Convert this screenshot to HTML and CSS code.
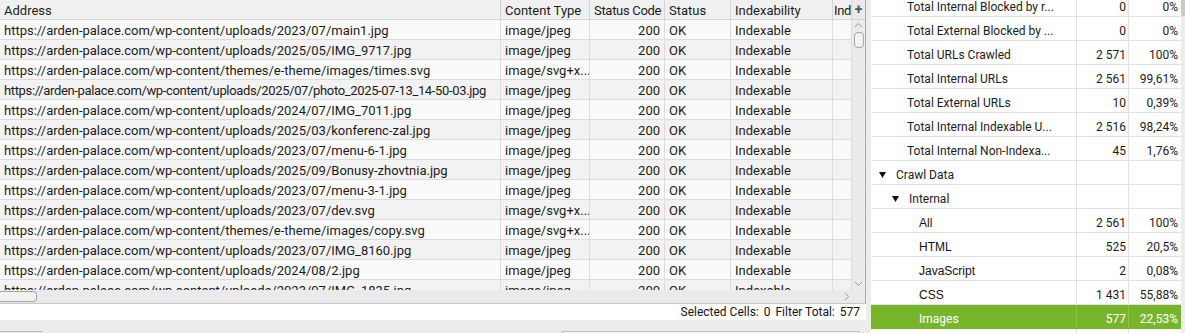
FILE: index.html
```html
<!DOCTYPE html>
<html lang="en">

<head>
    <meta charset="UTF-8">
    <meta name="viewport" content="width=device-width, initial-scale=1.0">
    <title>Crawl</title>
    <link rel="stylesheet" href="styles.css">
</head>

<body>
    <div class="app">
        <div class="left">
            <div class="grid">
                <div class="grid-head">
                    <div class="cell">Address</div>
                    <div class="cell">Content Type</div>
                    <div class="cell">Status Code</div>
                    <div class="cell">Status</div>
                    <div class="cell">Indexability</div>
                    <div class="cell cut">Ind</div>
                    <div class="cell plus">+</div>
                </div>
                <div class="grid-body">
                    <div class="rows">
                        <div class="row"><div class="cell">https://arden-palace.com/wp-content/uploads/2023/07/main1.jpg</div><div class="cell">image/jpeg</div><div class="cell num">200</div><div class="cell">OK</div><div class="cell">Indexable</div><div class="cell"></div></div>
                        <div class="row"><div class="cell">https://arden-palace.com/wp-content/uploads/2025/05/IMG_9717.jpg</div><div class="cell">image/jpeg</div><div class="cell num">200</div><div class="cell">OK</div><div class="cell">Indexable</div><div class="cell"></div></div>
                        <div class="row"><div class="cell">https://arden-palace.com/wp-content/themes/e-theme/images/times.svg</div><div class="cell">image/svg+x...</div><div class="cell num">200</div><div class="cell">OK</div><div class="cell">Indexable</div><div class="cell"></div></div>
                        <div class="row"><div class="cell tight">https://arden-palace.com/wp-content/uploads/2025/07/photo_2025-07-13_14-50-03.jpg</div><div class="cell">image/jpeg</div><div class="cell num">200</div><div class="cell">OK</div><div class="cell">Indexable</div><div class="cell"></div></div>
                        <div class="row"><div class="cell">https://arden-palace.com/wp-content/uploads/2024/07/IMG_7011.jpg</div><div class="cell">image/jpeg</div><div class="cell num">200</div><div class="cell">OK</div><div class="cell">Indexable</div><div class="cell"></div></div>
                        <div class="row"><div class="cell">https://arden-palace.com/wp-content/uploads/2025/03/konferenc-zal.jpg</div><div class="cell">image/jpeg</div><div class="cell num">200</div><div class="cell">OK</div><div class="cell">Indexable</div><div class="cell"></div></div>
                        <div class="row"><div class="cell">https://arden-palace.com/wp-content/uploads/2023/07/menu-6-1.jpg</div><div class="cell">image/jpeg</div><div class="cell num">200</div><div class="cell">OK</div><div class="cell">Indexable</div><div class="cell"></div></div>
                        <div class="row"><div class="cell">https://arden-palace.com/wp-content/uploads/2025/09/Bonusy-zhovtnia.jpg</div><div class="cell">image/jpeg</div><div class="cell num">200</div><div class="cell">OK</div><div class="cell">Indexable</div><div class="cell"></div></div>
                        <div class="row"><div class="cell">https://arden-palace.com/wp-content/uploads/2023/07/menu-3-1.jpg</div><div class="cell">image/jpeg</div><div class="cell num">200</div><div class="cell">OK</div><div class="cell">Indexable</div><div class="cell"></div></div>
                        <div class="row"><div class="cell">https://arden-palace.com/wp-content/uploads/2023/07/dev.svg</div><div class="cell">image/svg+x...</div><div class="cell num">200</div><div class="cell">OK</div><div class="cell">Indexable</div><div class="cell"></div></div>
                        <div class="row"><div class="cell">https://arden-palace.com/wp-content/themes/e-theme/images/copy.svg</div><div class="cell">image/svg+x...</div><div class="cell num">200</div><div class="cell">OK</div><div class="cell">Indexable</div><div class="cell"></div></div>
                        <div class="row"><div class="cell">https://arden-palace.com/wp-content/uploads/2023/07/IMG_8160.jpg</div><div class="cell">image/jpeg</div><div class="cell num">200</div><div class="cell">OK</div><div class="cell">Indexable</div><div class="cell"></div></div>
                        <div class="row"><div class="cell">https://arden-palace.com/wp-content/uploads/2024/08/2.jpg</div><div class="cell">image/jpeg</div><div class="cell num">200</div><div class="cell">OK</div><div class="cell">Indexable</div><div class="cell"></div></div>
                        <div class="row"><div class="cell">https://arden-palace.com/wp-content/uploads/2023/07/IMG_1835.jpg</div><div class="cell">image/jpeg</div><div class="cell num">200</div><div class="cell">OK</div><div class="cell">Indexable</div><div class="cell"></div></div>
                    </div>
                    <div class="vscroll">
                        <svg class="arrow" width="9" height="6" viewBox="0 0 9 6"><path d="M1 5 L4.5 1.5 L8 5" fill="none" stroke="#999" stroke-width="1"/></svg>
                        <div class="vthumb"></div>
                        <div class="fill"></div>
                        <svg class="arrow" width="9" height="6" viewBox="0 0 9 6"><path d="M1 1 L4.5 4.5 L8 1" fill="none" stroke="#999" stroke-width="1"/></svg>
                    </div>
                </div>
            </div>
            <div class="hscroll">
                <div class="hthumb"></div>
                <div class="fill"></div>
                <svg class="arrow-r" width="6" height="9" viewBox="0 0 6 9"><path d="M1 1 L4.5 4.5 L1 8" fill="none" stroke="#999" stroke-width="1"/></svg>
            </div>
            <div class="statusbar">
                <span>Selected Cells:</span><span class="val">0</span>
                <span class="lbl">Filter Total:</span><span class="val">577</span>
            </div>
            <div class="bottom">
                <div class="tab-left"></div>
                <div class="box-right"></div>
            </div>
        </div>
        <div class="right">
            <div class="tree-wrap">
                <ul class="tree">
                    <li class="node"><span class="name lvl1">Total Internal Blocked by r...</span><span class="n">0</span><span class="p">0%</span></li>
                    <li class="node"><span class="name lvl1">Total External Blocked by ...</span><span class="n">0</span><span class="p">0%</span></li>
                    <li class="node"><span class="name lvl1">Total URLs Crawled</span><span class="n">2 571</span><span class="p">100%</span></li>
                    <li class="node"><span class="name lvl1">Total Internal URLs</span><span class="n">2 561</span><span class="p">99,61%</span></li>
                    <li class="node"><span class="name lvl1">Total External URLs</span><span class="n">10</span><span class="p">0,39%</span></li>
                    <li class="node"><span class="name lvl1">Total Internal Indexable U...</span><span class="n">2 516</span><span class="p">98,24%</span></li>
                    <li class="node"><span class="name lvl1">Total Internal Non-Indexa...</span><span class="n">45</span><span class="p">1,76%</span></li>
                    <li class="node"><span class="name lvl0"><svg class="tri" width="7" height="6" viewBox="0 0 7 6"><path d="M0 0 H7 L3.5 6 Z" fill="#111"/></svg>Crawl Data</span><span class="n"></span><span class="p"></span></li>
                    <li class="node"><span class="name lvl1b"><svg class="tri" width="7" height="6" viewBox="0 0 7 6"><path d="M0 0 H7 L3.5 6 Z" fill="#111"/></svg>Internal</span><span class="n"></span><span class="p"></span></li>
                    <li class="node"><span class="name lvl2">All</span><span class="n">2 561</span><span class="p">100%</span></li>
                    <li class="node"><span class="name lvl2">HTML</span><span class="n">525</span><span class="p">20,5%</span></li>
                    <li class="node"><span class="name lvl2">JavaScript</span><span class="n">2</span><span class="p">0,08%</span></li>
                    <li class="node"><span class="name lvl2">CSS</span><span class="n">1 431</span><span class="p">55,88%</span></li>
                    <li class="node selected"><span class="name lvl2 img">Images</span><span class="n">577</span><span class="p">22,53%</span></li>
                    <li class="node"><span class="name"></span><span class="n"></span><span class="p"></span></li>
                </ul>
                <div class="rscroll"><div class="rthumb"></div></div>
            </div>
        </div>
    </div>
</body>

</html>
```

FILE: styles.css
```css
* {
    margin: 0;
    padding: 0;
    box-sizing: border-box;
}

body {
    background-color: #ececec;
    font-family: Roboto, "Liberation Sans", sans-serif;
    font-size: 13px;
    color: #1b1b1b;
    overflow: hidden;
}

.app {
    display: flex;
    height: 333px;
    width: 1185px;
}

.left {
    width: 866px;
    display: flex;
    flex-direction: column;
}

.grid {
    height: 290px;
    display: flex;
    flex-direction: column;
    border-right: 1px solid #a9a9a9;
    background-color: #fafafa;
}

.grid-head,
.row {
    display: grid;
    grid-template-columns: 501px 89px 75px 66px 102px 19px;
}

.grid-head {
    grid-template-columns: 501px 89px 75px 66px 102px 19px 13px;
    height: 20px;
    background-color: #f0f0f0;
    border-bottom: 1px solid #d4d4d4;
}

.cell {
    border-right: 1px solid #dcdcdc;
    padding: 3px 4px 0;
    white-space: nowrap;
    overflow: hidden;
    line-height: 16px;
}

.cell.tight {
    letter-spacing: -0.35px;
}

.grid-head .cell {
    border-right-color: #d4d4d4;
}

.grid-head .cell:nth-child(3) {
    letter-spacing: -0.3px;
}

.cell.cut {
    padding: 3px 0 0 1px;
    letter-spacing: -0.4px;
}

.cell.plus {
    border-right: none;
    padding: 1px 0 0;
    text-align: center;
    font-weight: bold;
    font-size: 14px;
    color: #555;
    background-color: #eaeaea;
}

.cell.num {
    text-align: right;
    padding-right: 4px;
}

.grid-body {
    flex: 1;
    display: flex;
    overflow: hidden;
}

.rows {
    width: 852px;
    overflow: hidden;
}

.row {
    height: 20px;
    border-bottom: 1px solid #dcdcdc;
    background-color: #fafafa;
}

.row:nth-child(even) {
    background-color: #f2f2f2;
}

.vscroll {
    width: 13px;
    background-color: #ebebeb;
    display: flex;
    flex-direction: column;
    align-items: center;
    padding: 2px 0 3px;
}

.vthumb {
    width: 10px;
    height: 16px;
    margin-top: 4px;
    border: 1px solid #a6a6a6;
    border-radius: 4px;
    background-color: #f2f2f2;
}

.fill {
    flex: 1;
}

.hscroll {
    height: 14px;
    display: flex;
    align-items: center;
    padding-right: 15px;
    background-color: #eaeaea;
    border-right: 1px solid #a9a9a9;
    border-bottom: 1px solid #c6c6c6;
}

.hthumb {
    width: 37px;
    height: 11px;
    border: 1px solid #a6a6a6;
    border-left: none;
    border-radius: 0 4px 4px 0;
    background-color: #f2f2f2;
}

.statusbar {
    height: 17px;
    background-color: #fff;
    display: flex;
    justify-content: flex-end;
    align-items: center;
    padding-right: 6px;
    padding-top: 1px;
    font-size: 12px;
    color: #111;
}

.statusbar .val {
    margin-left: 5px;
}

.statusbar .lbl {
    margin-left: 5px;
}

.bottom {
    flex: 1;
    display: flex;
    align-items: flex-end;
    padding-top: 11px;
}

.tab-left {
    width: 43px;
    height: 2px;
    border-top: 1px solid #bdbdbd;
    border-right: 1px solid #bdbdbd;
    border-radius: 0 3px 0 0;
}

.box-right {
    width: 299px;
    height: 2px;
    margin-left: 518px;
    border-top: 1px solid #bdbdbd;
    border-left: 1px solid #bdbdbd;
    border-right: 1px solid #bdbdbd;
    border-radius: 3px 3px 0 0;
    background-color: #f4f4f4;
}

.right {
    margin-left: 5px;
    flex: 1;
    background-color: #fff;
    overflow: hidden;
    font-size: 12px;
}

.tree-wrap {
    display: flex;
    height: 333px;
}

.tree {
    list-style: none;
    margin-top: -7px;
    width: 310px;
}

.node {
    display: flex;
    height: 24px;
    border-bottom: 1px solid #e1e1e1;
    line-height: 18px;
}

.node .name,
.node .n,
.node .p {
    padding-top: 5px;
}

.node .name {
    width: 206px;
    border-right: 1px solid #e1e1e1;
    display: flex;
    align-items: center;
    white-space: nowrap;
}

.node .n,
.node .p {
    width: 52px;
    text-align: right;
    padding-right: 2px;
    border-right: 1px solid #e1e1e1;
}

.node .p {
    padding-right: 3px;
    border-right: none;
}

.lvl0 {
    padding-left: 8px;
}

.lvl1 {
    padding-left: 36px;
}

.lvl1b {
    padding-left: 21px;
}

.lvl2 {
    padding-left: 48px;
    font-family: "Liberation Sans", Arial, sans-serif;
    color: #111;
}

.lvl2.img {
    font-family: Roboto, sans-serif;
}

.tri {
    margin-right: 10px;
}

.node.selected {
    background-color: #77b62b;
    color: #fff;
    border-bottom-color: #77b62b;
}

.node.selected .name,
.node.selected .n {
    border-right-color: #8cc44a;
    color: #fff;
}

.rscroll {
    width: 4px;
    background-color: #ececec;
}

.rthumb {
    height: 16px;
    background-color: #c9c9c9;
}
```
